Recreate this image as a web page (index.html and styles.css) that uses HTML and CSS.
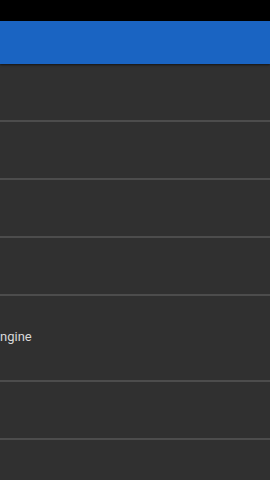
FILE: index.html
```html
<!DOCTYPE html>
<html lang="en">

<head>
    <meta charset="UTF-8">
    <meta name="viewport" content="width=device-width, initial-scale=1.0">
    <title>Settings</title>
    <link rel="stylesheet" href="styles.css">
</head>

<body>
    <div class="status_bar"></div>
    <div class="app_bar"></div>
    <div class="list">
        <div class="row"></div>
        <div class="row"></div>
        <div class="row"></div>
        <div class="row"></div>
        <div class="row tall">
            <span class="label">ngine</span>
        </div>
        <div class="row"></div>
        <div class="row"></div>
    </div>
</body>

</html>
```

FILE: styles.css
```css
html,
body {
    margin: 0;
    padding: 0;
    width: 270px;
    height: 480px;
    overflow: hidden;
    background: #303030;
    font-family: Roboto, "Liberation Sans", sans-serif;
}

.status_bar {
    height: 21px;
    background: #000000;
}

.app_bar {
    height: 43px;
    background: #1a64c2;
    box-shadow: 0 1px 2px rgba(0, 0, 0, 0.6);
    position: relative;
}

.list {
    display: flex;
    flex-direction: column;
}

.row {
    height: 56px;
    border-bottom: 2px solid #4c4c4c;
    display: flex;
    align-items: center;
}

.row.tall {
    height: 84px;
}

.label {
    margin-top: -4px;
    font-size: 13px;
    color: #d8d8d8;
    white-space: nowrap;
}
```
